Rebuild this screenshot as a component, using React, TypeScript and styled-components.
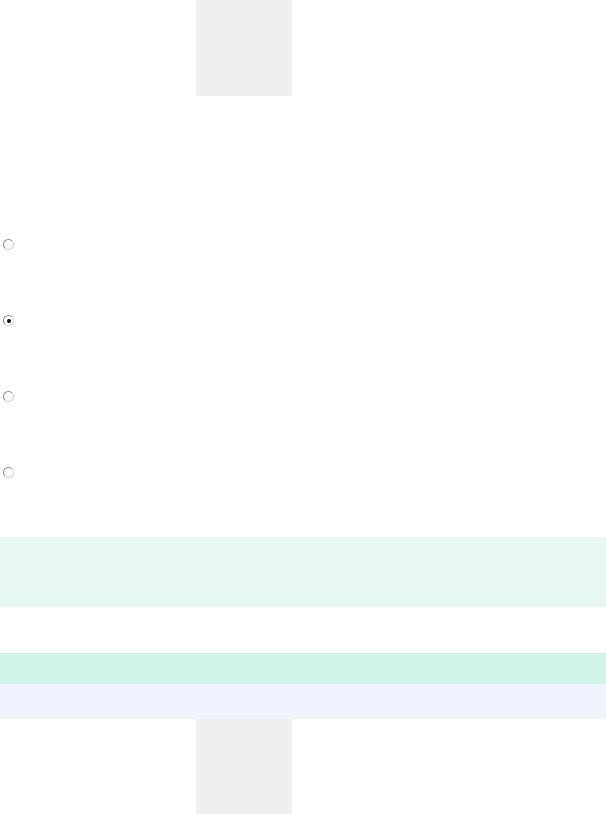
import React, { useState } from 'react'
import styled, { createGlobalStyle } from 'styled-components'

const GlobalStyle = createGlobalStyle`
  html, body {
    margin: 0;
    padding: 0;
    background: #ffffff;
    font-family: 'Liberation Sans', Arial, sans-serif;
  }
`

const Page = styled.div`
  display: flex;
  flex-direction: column;
  width: 606px;
`

const Tile = styled.div`
  width: 96px;
  height: 96px;
  margin-left: 196px;
  background-color: #efefef;
  flex-shrink: 0;
`

const OptionList = styled.div`
  display: flex;
  flex-direction: column;
  gap: 65px;
  padding: 143px 0 59px 3px;
`

const Radio = styled.button<{ $checked: boolean }>`
  width: 11px;
  height: 11px;
  padding: 0;
  border-radius: 50%;
  border: 1px solid #8a8a8a;
  border-bottom-color: #d4d4d4;
  border-right-color: #d4d4d4;
  background: #ffffff;
  display: flex;
  align-items: center;
  justify-content: center;
  cursor: pointer;

  &::after {
    content: '';
    width: 4px;
    height: 4px;
    border-radius: 50%;
    background: #111111;
    display: ${p => (p.$checked ? 'block' : 'none')};
  }
`

const Band = styled.div<{ $tone: string; $h: number }>`
  height: ${p => p.$h}px;
  background-color: ${p => p.$tone};
`

const Spacer = styled.div`
  height: 46px;
`

export default function App() {
  const [selected, setSelected] = useState(1)

  return (
    <Page>
      <GlobalStyle />
      <Tile />
      <OptionList>
        {[0, 1, 2, 3].map(i => (
          <Radio
            key={i}
            type="button"
            aria-label={`option ${i + 1}`}
            $checked={selected === i}
            onClick={() => setSelected(i)}
          />
        ))}
      </OptionList>
      <Band $tone="#e7f8f0" $h={70} />
      <Spacer />
      <Band $tone="#cff3e4" $h={31} />
      <Band $tone="#eef3fd" $h={35} />
      <Tile />
    </Page>
  )
}
